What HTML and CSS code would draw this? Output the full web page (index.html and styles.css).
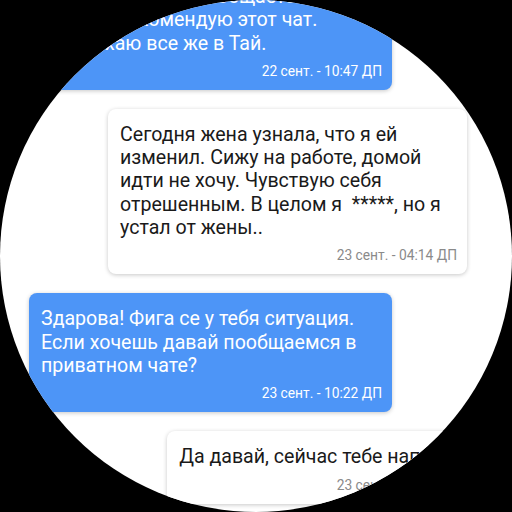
FILE: index.html
```html
<!DOCTYPE html>
<html>
<head>
    <title>Чат</title>
    <link rel="stylesheet" href="styles.css">
</head>
<body>
    <div class="screen">
        <div class="chat">
            <div class="msg msg-out">
                <p class="msg-text">Тут народ реально общается.<br>Короче, рекомендую этот чат.<br>Я отдыхаю все же в Тай.</p>
                <span class="msg-time">22 сент. - 10:47 ДП</span>
            </div>
            <div class="msg msg-in">
                <p class="msg-text">Сегодня жена узнала, что я ей изменил. Сижу на работе, домой идти не хочу. Чувствую себя отрешенным. В целом я&nbsp; *****, но я устал от жены..</p>
                <span class="msg-time">23 сент. - 04:14 ДП</span>
            </div>
            <div class="msg msg-out">
                <p class="msg-text">Здарова! Фига се у тебя ситуация. Если хочешь давай пообщаемся в приватном чате?</p>
                <span class="msg-time">23 сент. - 10:22 ДП</span>
            </div>
            <div class="msg msg-in">
                <p class="msg-text">Да давай, сейчас тебе напишу</p>
                <span class="msg-time">23 сент. - 10:25 ДП</span>
            </div>
        </div>
    </div>
</body>
</html>
```

FILE: styles.css
```css
* {
    padding: 0;
    margin: 0;
    box-sizing: border-box;
}
body {
    width: 512px;
    height: 512px;
    background-color: #000000;
    font-family: Roboto, "Noto Sans", sans-serif;
    overflow: hidden;
}
.screen {
    width: 512px;
    height: 512px;
    border-radius: 50%;
    background-color: #ffffff;
    overflow: hidden;
}
.chat {
    display: flex;
    flex-direction: column;
    gap: 19px;
    margin-top: -29px; /* list is scrolled a little */
}
.msg {
    display: flex;
    flex-direction: column;
    padding: 14px 10px 10px 12px;
    border-radius: 8px;
    box-shadow: 0 1px 4px rgba(0, 0, 0, 0.22);
}
.msg-out {
    align-self: flex-start;
    width: 363px;
    margin-left: 29px;
    background-color: #4d95f7;
    color: #ffffff;
}
.msg-in {
    align-self: flex-end;
    max-width: 359px;
    margin-right: 45px;
    background-color: #ffffff;
    color: #1a1a1a;
}
.msg-text {
    font-size: 19.6px;
    line-height: 23.3px;
}
.msg-time {
    align-self: flex-end;
    margin-top: 7px;
    font-size: 13.8px;
    line-height: 18px;
}
.msg-in .msg-time {
    color: #8a8a8a;
}
```
